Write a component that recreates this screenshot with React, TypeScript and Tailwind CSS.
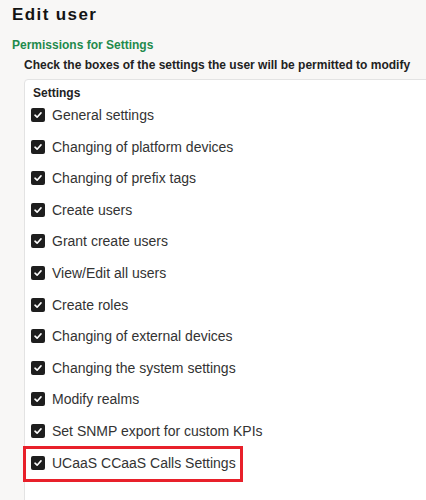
const permissions = [
  "General settings",
  "Changing of platform devices",
  "Changing of prefix tags",
  "Create users",
  "Grant create users",
  "View/Edit all users",
  "Create roles",
  "Changing of external devices",
  "Changing the system settings",
  "Modify realms",
  "Set SNMP export for custom KPIs",
  "UCaaS CCaaS Calls Settings",
];

function CheckBox() {
  return (
    <span className="ml-[-2px] flex h-[14px] w-[14px] shrink-0 items-center justify-center rounded-[2px] bg-[#1e1e1e]">
      <svg width="10" height="10" viewBox="0 0 10 10" fill="none">
        <path d="M2 5.2 L4.1 7.2 L8 2.9" stroke="#fff" strokeWidth="1.6" strokeLinecap="round" strokeLinejoin="round" />
      </svg>
    </span>
  );
}

export default function App() {
  return (
    <div className="min-h-screen w-[426px] overflow-hidden bg-[#f8f7f6] pl-[12px] font-['Liberation_Sans',Arial,sans-serif]">
      <h1 className="pt-[5px] text-[17px] font-bold leading-[20px] tracking-[1.4px] text-[#141414]">Edit user</h1>
      <p className="mt-[13px] text-[12px] font-bold leading-[14px] text-[#1f8a4c]">Permissions for Settings</p>
      <p className="mt-[6px] pl-[12px] text-[12px] font-bold leading-[14px] text-[#222]">
        Check the boxes of the settings the user will be permitted to modify
      </p>
      <div className="ml-[12px] mt-[7px] w-[440px] rounded-[4px] border border-[#e3e3e3] bg-white pb-[30px] pl-[8px] pt-[6px]">
        <p className="text-[12px] font-bold leading-[14px] text-[#222]">Settings</p>
        <ul className="mt-[5px] flex flex-col gap-[11.6px]">
          {permissions.map((label, i) => (
            <li key={label} className="relative flex h-[20px] items-center">
              <CheckBox />
              <span className="ml-[7px] text-[14px] leading-[20px] text-[#333]">{label}</span>
              {i === permissions.length - 1 && (
                <span className="pointer-events-none absolute left-[-10px] top-[-7px] h-[36px] w-[220px] border-[3px] border-[#e8202a]" />
              )}
            </li>
          ))}
        </ul>
      </div>
    </div>
  );
}
